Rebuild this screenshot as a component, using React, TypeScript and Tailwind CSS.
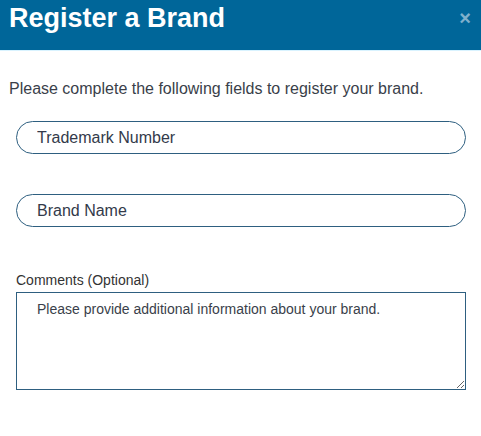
import { useState } from 'react';

const RegisterBrand = () => {
  const [trademark, setTrademark] = useState("");
  const [brand, setBrand] = useState("");
  const [comments, setComments] = useState("");

  return (
    <div className="w-[481px] h-[436px] bg-white font-['Liberation_Sans',Arial,sans-serif] overflow-hidden">
      <div className="h-[50px] bg-[#006699] border-b border-[#d9f3ff] flex items-start justify-between pl-[9px] pr-[10px] box-content">
        <h1 className="text-white font-bold text-[27px] leading-[34px] pt-[1px]">Register a Brand</h1>
        <button className="text-[#7fb0cc] text-[20px] font-bold leading-none mt-[8px]">×</button>
      </div>
      <div className="px-[9px] pt-[28px]">
        <p className="text-[16px] text-[#3a3f4a] leading-[19px]">
          Please complete the following fields to register your brand.
        </p>
        <div className="px-[7px] mt-[23px] flex flex-col">
          <input
            placeholder="Trademark Number"
            value={trademark}
            onChange={(e) => setTrademark(e.target.value)}
            className="h-[33px] w-[450px] rounded-full border border-[#2e5f80] px-[20px] text-[16px] text-[#333a4a] placeholder:text-[#333a4a] outline-none"
          />
          <input
            placeholder="Brand Name"
            value={brand}
            onChange={(e) => setBrand(e.target.value)}
            className="h-[33px] w-[450px] rounded-full border border-[#2e5f80] px-[20px] text-[16px] text-[#333a4a] placeholder:text-[#333a4a] outline-none mt-[40px]"
          />
          <label className="mt-[45px] text-[14px] text-[#333] leading-[17px]">Comments (Optional)</label>
          <textarea
            placeholder="Please provide additional information about your brand."
            value={comments}
            onChange={(e) => setComments(e.target.value)}
            className="mt-[3px] h-[98px] w-[450px] border-[1.5px] border-[#2e5f80] px-[20px] py-[6px] text-[14px] text-[#333a4a] placeholder:text-[#3a3f4a] outline-none"
          />
        </div>
      </div>
    </div>
  );
};

export default RegisterBrand;
